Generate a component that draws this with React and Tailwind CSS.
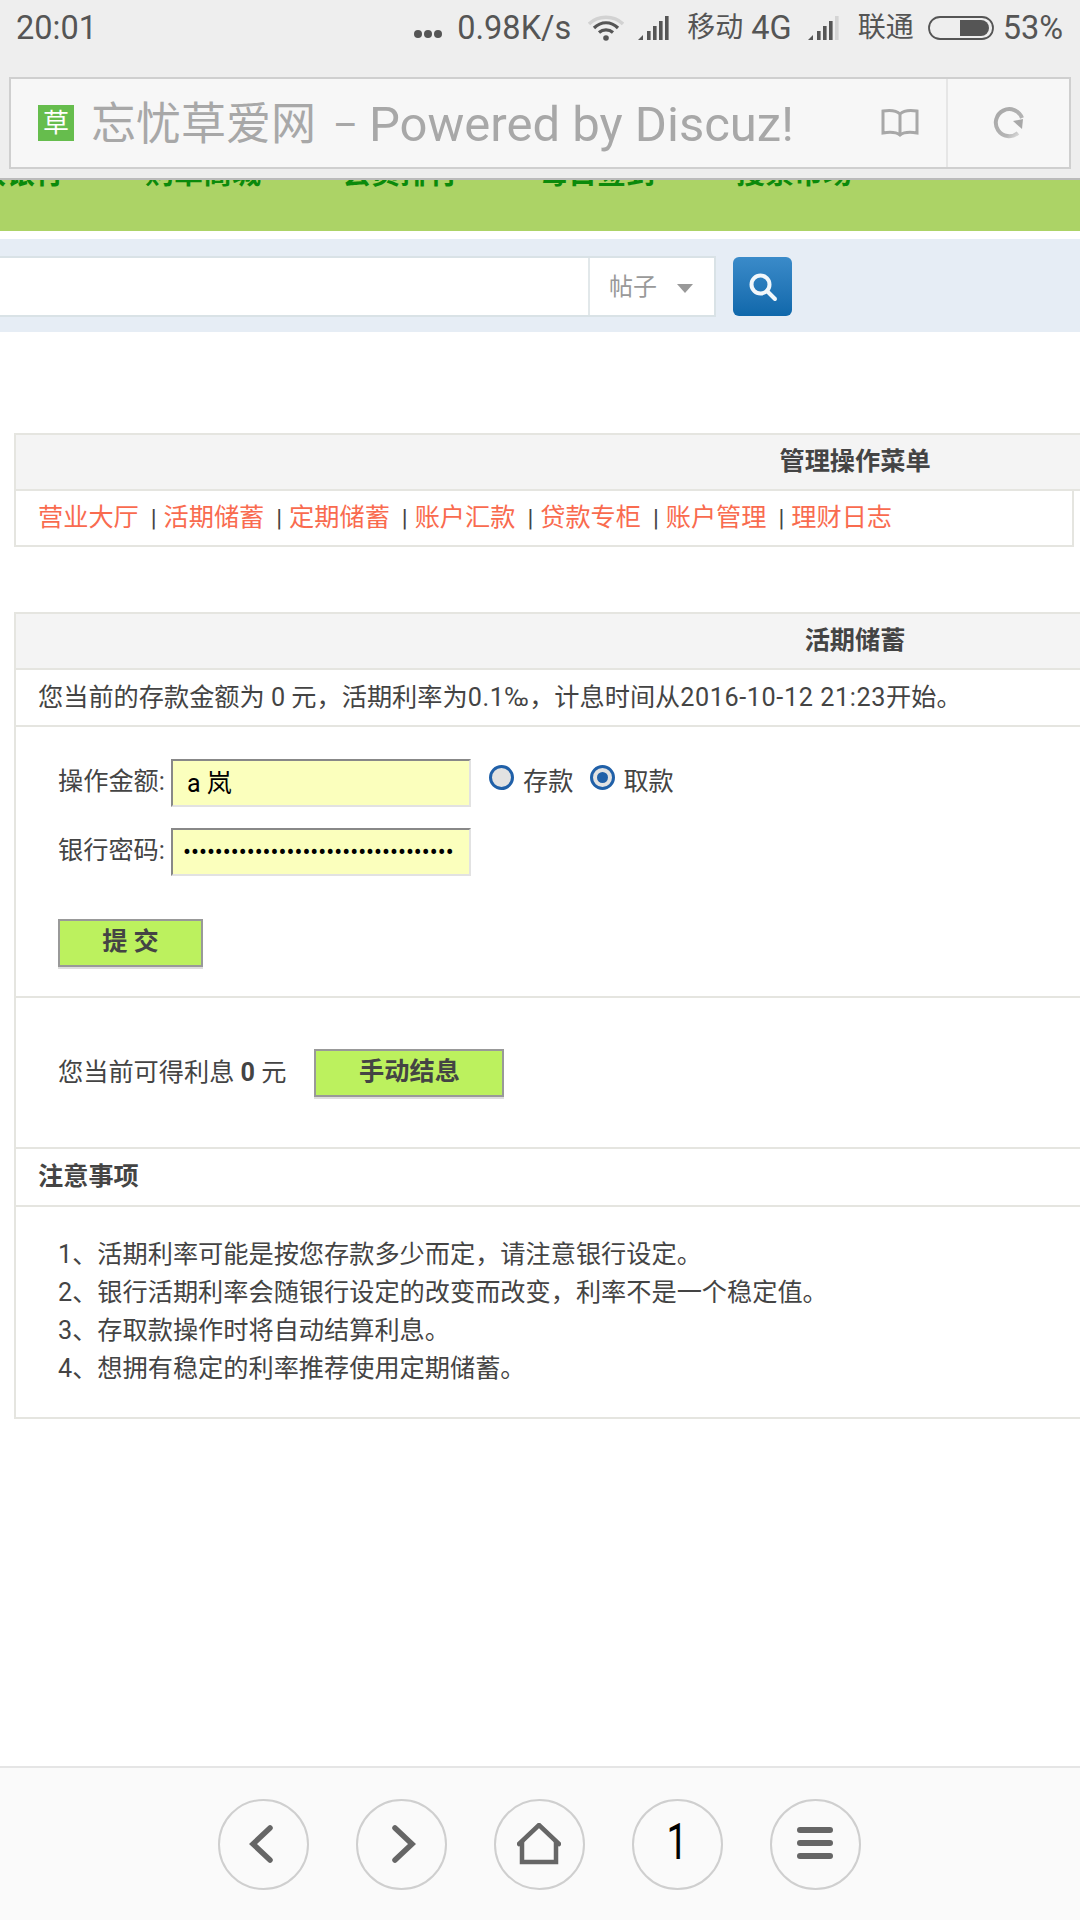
import React from "react";

const FONT = { fontFamily: 'Roboto, "Noto Sans CJK SC", sans-serif' };

function Signal({ weak }) {
  const bars = [
    [6, 15, 4, 9],
    [12, 10, 4, 14],
    [18, 5, 4, 19],
    [24, 0, 4, 24],
  ];
  return (
    <svg width="34" height="24" viewBox="0 0 34 24">
      <path d="M0 24 L5 19 V24 Z" fill="#555" />
      {bars.map((b, i) => (
        <rect key={i} x={b[0] + 3} y={b[1]} width="3.6" height={b[3]} fill={weak && i === 3 ? "#d4d4d4" : "#555"} />
      ))}
    </svg>
  );
}

function Wifi() {
  return (
    <svg width="36" height="26" viewBox="0 0 36 26" fill="none">
      <path d="M1 9 C10 0 26 0 35 9" stroke="#d2d2d2" strokeWidth="3.4" />
      <path d="M6 13 C13 6 23 6 30 13" stroke="#555" strokeWidth="3.2" />
      <path d="M11 17.5 C15 14 21 14 25 17.5" stroke="#555" strokeWidth="3.2" />
      <circle cx="18" cy="23" r="2.8" fill="#555" />
    </svg>
  );
}

function Battery() {
  return (
    <svg width="66" height="24" viewBox="0 0 66 24" fill="none">
      <rect x="1" y="1" width="64" height="22" rx="11" stroke="#555" strokeWidth="1.8" />
      <path d="M32 4 H53 A8 8 0 0 1 53 20 H32 Z" fill="#555" />
    </svg>
  );
}

function StatusBar() {
  return (
    <div className="h-[56px] flex items-center pl-[16px] pr-[17px] text-[#555] text-[32.5px]">
      <span className="leading-none">20:01</span>
      <div className="ml-auto flex items-center">
        <span className="flex gap-[2px] mr-[15px] mt-[12px]">
          <i className="block w-[8px] h-[8px] rounded-full bg-[#555]" />
          <i className="block w-[8px] h-[8px] rounded-full bg-[#555]" />
          <i className="block w-[8px] h-[8px] rounded-full bg-[#555]" />
        </span>
        <span className="leading-none">0.98K/s</span>
        <span className="ml-[17px]"><Wifi /></span>
        <span className="ml-[14px]"><Signal /></span>
        <span className="ml-[15px] leading-none text-[28px]">移动</span>
        <span className="ml-[8px] leading-none">4G</span>
        <span className="ml-[16px]"><Signal weak /></span>
        <span className="ml-[16px] leading-none text-[28px]">联通</span>
        <span className="ml-[14px]"><Battery /></span>
        <span className="ml-[9px] leading-none">53%</span>
      </div>
    </div>
  );
}

function UrlBar() {
  return (
    <div className="mt-[21px] mx-[9px] h-[92px] border-2 border-[#cfcfcf] bg-[#f7f7f7] flex items-center">
      <div className="ml-[27px] w-[36px] h-[36px] bg-[#66bd4d] text-white text-[26px] leading-[36px] text-center">草</div>
      <div className="ml-[17px] mt-[3px] text-[#a8a8a8] text-[45px] leading-none whitespace-nowrap flex items-center">
        <span>忘忧草爱网</span>
        <span className="ml-[17px] text-[38px]">–</span>
        <span className="ml-[11px] text-[49px]">Powered by Discuz!</span>
      </div>
      <div className="ml-auto w-[52px] flex justify-center mr-[20px]">
        <svg width="38" height="30" viewBox="0 0 38 30" fill="none" stroke="#a8a8a8" strokeWidth="3">
          <path d="M19 6 C15 2 8 2 2 3 V25 C8 24 15 24 19 27 C23 24 30 24 36 25 V3 C30 2 23 2 19 6 Z M19 6 V27" />
        </svg>
      </div>
      <div className="w-[123px] self-stretch border-l-2 border-[#e6e6e6] flex items-center justify-center">
        <svg width="34" height="34" viewBox="0 0 34 34" fill="none">
          <defs>
            <linearGradient id="rf" x1="0" y1="0" x2="1" y2="1">
              <stop offset="0" stopColor="#a8a8a8" />
              <stop offset="0.7" stopColor="#b4b4b4" />
              <stop offset="1" stopColor="#e8e8e8" />
            </linearGradient>
          </defs>
          <path d="M26 27 A13.5 13.5 0 1 1 30 12" stroke="url(#rf)" strokeWidth="4" />
          <path d="M21 15 L31 13 L30 23 Z" fill="#a8a8a8" />
        </svg>
      </div>
    </div>
  );
}

function NavStrip() {
  const items = ["草根银行", "购草商城", "会员排行", "每日签到", "搜索市场"];
  return (
    <div className="h-[51px] bg-[#acd366] overflow-hidden">
      <div className="flex ml-[-52px] gap-[82px] mt-[-18px] text-[29px] font-bold text-[#0b8a0b] whitespace-nowrap">
        {items.map((t) => (
          <span key={t} className="block w-[115px] leading-[24px]">{t}</span>
        ))}
      </div>
    </div>
  );
}

function SearchBar() {
  return (
    <div className="mt-[8px] h-[93px] bg-[#e6edf5] flex items-center">
      <div className="w-[716px] h-[61px] mt-[2px] bg-white border-y-2 border-r-2 border-[#d9e2e6] flex">
        <div className="w-[590px] border-r-2 border-[#e2e8ea]" />
        <div className="flex-1 flex items-center pl-[19px]">
          <span className="text-[#999] text-[24px] leading-none">帖子</span>
          <span className="ml-[20px] mt-[4px]">
            <svg width="16" height="9" viewBox="0 0 16 9"><path d="M0 0 H16 L8 9 Z" fill="#999" /></svg>
          </span>
        </div>
      </div>
      <div className="ml-[17px] w-[59px] h-[59px] mt-[2px] rounded-[6px] bg-gradient-to-b from-[#3a8bc9] to-[#0f68ab] flex items-center justify-center">
        <svg width="30" height="30" viewBox="0 0 30 30" fill="none" stroke="#f2f7fb">
          <circle cx="12.5" cy="12.5" r="9" strokeWidth="4" />
          <path d="M19 19 L27 27" strokeWidth="4" strokeLinecap="round" />
        </svg>
      </div>
    </div>
  );
}

function TitleRow({ children }) {
  return (
    <div className="w-[1682px] h-[58px] border-2 border-[#e5e5e0] bg-[#f4f4f4] text-center font-bold text-[#444] text-[25.2px] leading-[53px]">
      {children}
    </div>
  );
}

function MenuBox() {
  const links = ["营业大厅", "活期储蓄", "定期储蓄", "账户汇款", "贷款专柜", "账户管理", "理财日志"];
  return (
    <div className="mt-[101px] ml-[14px]">
      <TitleRow>管理操作菜单</TitleRow>
      <div className="w-[1060px] h-[56px] border-x-2 border-b-2 border-[#e5e5e0] pl-[22px] flex items-center text-[25.2px] whitespace-nowrap">
        {links.map((l, i) => (
          <React.Fragment key={l}>
            {i > 0 && <span className="w-[24.8px] pl-[12px] text-[#444] text-[24px] leading-none">|</span>}
            <span className="text-[#f96b4f] leading-none">{l}</span>
          </React.Fragment>
        ))}
      </div>
    </div>
  );
}

function Radio({ checked }) {
  return (
    <span className="relative block w-[25px] h-[25px] rounded-full border-[3px] border-[#2060a8] bg-[#e2e2e2] mb-[8px]">
      {checked && <span className="absolute left-[4px] top-[4px] w-[11px] h-[11px] rounded-full bg-[#2060a8]" />}
    </span>
  );
}

const inputCls =
  "w-[300px] h-[48px] border-2 border-t-[#888] border-l-[#888] border-r-[#e2e2e2] border-b-[#e2e2e2] bg-[#fbffbd] text-black outline-none";

function FieldLabel({ children }) {
  return <span className="w-[113px] text-[#444] whitespace-nowrap mb-[3px]">{children}</span>;
}

function SavingsBox() {
  const btn = "h-[48px] border-2 border-[#999] bg-[#bcf15e] font-bold text-[#444] shadow-[0_2px_0_#dedede] text-[25.2px] leading-none pb-[3px]";
  return (
    <div className="mt-[65px] ml-[14px] text-[25.2px] text-[#444]">
      <TitleRow>活期储蓄</TitleRow>
      <div className="w-[1682px] border-x-2 border-[#e5e5e0]">
        <div className="h-[57px] border-b-2 border-[#e5e5e0] pl-[22px] flex items-center whitespace-pre">
          <span>您当前的存款金额为 0 元，活期利率为<span className="tracking-[0.6px]">0.1‰</span>，计息时间从<span className="tracking-[0.6px]">2016-10-12 21:23</span>开始。</span>
        </div>
        <div className="h-[271px] pt-[32px] pl-[42px] border-b-2 border-[#e5e5e0]">
          <div className="flex items-center h-[48px]">
            <FieldLabel>操作金额:</FieldLabel>
            <input readOnly value="a 岚" className={`${inputCls} pl-[14px] text-[25px] pb-[4px]`} />
            <span className="ml-[18px] flex items-center mb-[3px]">
              <Radio />
              <span className="ml-[9px]">存款</span>
              <span className="ml-[17px]"><Radio checked /></span>
              <span className="ml-[8px]">取款</span>
            </span>
          </div>
          <div className="flex items-center h-[48px] mt-[21px]">
            <FieldLabel>银行密码:</FieldLabel>
            <input readOnly type="password" value="aaaaaaaaaaaaaaaaaaaaaaaaaaaaaaaaaa" className={`${inputCls} pl-[10px] text-[23.6px] overflow-hidden`} />
          </div>
          <button className={`${btn} block w-[145px] mt-[43px]`}>提 交</button>
        </div>
        <div className="h-[151px] pl-[42px] border-b-2 border-[#e5e5e0] flex items-center">
          <span className="whitespace-nowrap">您当前可得利息 <b>0</b> 元</span>
          <button className={`${btn} ml-[28px] w-[190px] mt-[1px]`}>手动结息</button>
        </div>
        <div className="h-[58px] border-b-2 border-[#e5e5e0] pl-[22px] flex items-center font-bold">注意事项</div>
        <div className="h-[212px] pl-[42px] pt-[29px] border-b-2 border-[#e5e5e0] leading-[38px]">
          <div>1、活期利率可能是按您存款多少而定，请注意银行设定。</div>
          <div>2、银行活期利率会随银行设定的改变而改变，利率不是一个稳定值。</div>
          <div>3、存取款操作时将自动结算利息。</div>
          <div>4、想拥有稳定的利率推荐使用定期储蓄。</div>
        </div>
      </div>
    </div>
  );
}

function Circle({ children }) {
  return (
    <div className="w-[91px] h-[91px] rounded-full border-2 border-[#cfcfcf] flex items-center justify-center">
      {children}
    </div>
  );
}

function BottomBar() {
  return (
    <div className="mt-auto h-[154px] border-t-2 border-[#e5e5e5] bg-[#fafafa] flex items-center justify-center gap-[47px] pr-[2px]">
      <Circle>
        <svg className="mr-[5px]" width="24" height="38" viewBox="0 0 24 38" fill="none" stroke="#666" strokeWidth="5.5" strokeLinecap="round" strokeLinejoin="miter">
          <path d="M21 3 L4 19 L21 35" />
        </svg>
      </Circle>
      <Circle>
        <svg className="ml-[5px]" width="24" height="38" viewBox="0 0 24 38" fill="none" stroke="#666" strokeWidth="5.5" strokeLinecap="round" strokeLinejoin="miter">
          <path d="M3 3 L20 19 L3 35" />
        </svg>
      </Circle>
      <Circle>
        <svg width="44" height="42" viewBox="0 0 44 42" fill="none" stroke="#666" strokeWidth="4.5" strokeLinecap="round">
          <path d="M2 21 L22 2 L42 21" />
          <path d="M5 18 V39 H39 V18" strokeLinecap="butt" />
        </svg>
      </Circle>
      <Circle>
        <span className="block text-black text-[50px] font-normal leading-none scale-x-75 mb-[4px]">1</span>
      </Circle>
      <Circle>
        <svg width="38" height="34" viewBox="0 0 38 34" fill="#666">
          <rect x="1" y="0" width="36" height="6" rx="3" />
          <rect x="1" y="13" width="36" height="6" rx="3" />
          <rect x="1" y="26" width="36" height="6" rx="3" />
        </svg>
      </Circle>
    </div>
  );
}

export default function App() {
  return (
    <div style={FONT} className="w-[1080px] h-[1920px] overflow-hidden bg-white flex flex-col">
      <div className="h-[180px] shrink-0 bg-[#eeeeee] border-b-2 border-[#bbbbbb] relative z-10">
        <StatusBar />
        <UrlBar />
      </div>
      <NavStrip />
      <SearchBar />
      <MenuBox />
      <SavingsBox />
      <BottomBar />
    </div>
  );
}
